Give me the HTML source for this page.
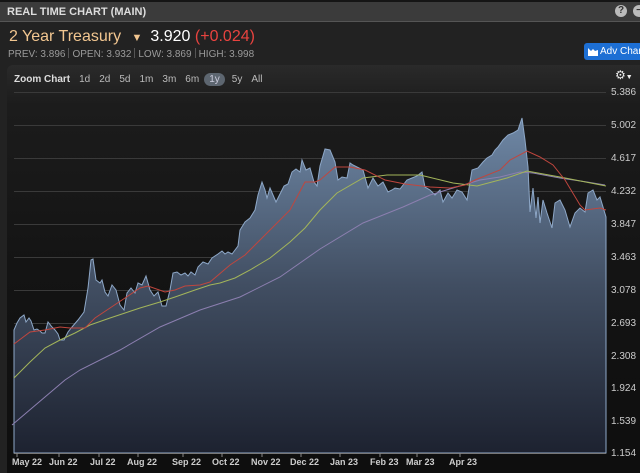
<!DOCTYPE html>
<html><head><style>
html,body{margin:0;width:640px;height:473px;overflow:hidden}
body{background:#222;font-family:"Liberation Sans",sans-serif;position:relative}
.tb{position:absolute;left:0;top:0;width:640px;height:22px;background:#3b3b3b;border-top:2px solid #151515;box-sizing:border-box;border-bottom:1px solid #555}
.tb span{position:absolute;left:7px;top:4px;font-size:11px;font-weight:bold;color:#ddd}
.ic{position:absolute;top:5px;width:12px;height:12px;border-radius:50%;background:#bbb;color:#333;font-size:10px;font-weight:bold;text-align:center;line-height:12px}
.hdr{position:absolute;left:9px;top:28px;font-size:16px;color:#f2c690;white-space:nowrap}
.hdr .p{color:#fff;margin-left:8px}.hdr .c{color:#e8433f}
.st{position:absolute;left:8px;top:48px;font-size:10px;color:#9a9a9a;white-space:nowrap}
.st i{display:inline-block;width:1px;height:10px;background:#555;margin:0 3px;vertical-align:-1px}
.btn{position:absolute;left:584px;top:43px;width:62px;height:17px;background:#1d6fd4;border-radius:3px;color:#fff;font-size:10px;line-height:17px;padding-left:16px;box-sizing:border-box;white-space:nowrap;overflow:hidden}
.panel{position:absolute;left:7px;top:65px;width:633px;height:408px;background:linear-gradient(#2a2a2a,#1c1c1c 40px,#141414 200px,#0e0e0e);border-radius:6px 0 0 0}
.zb{position:absolute;left:14px;top:74px;font-size:10px;color:#ccc;white-space:nowrap}
.zb b{color:#ddd;margin-right:9px}.zb span{margin-right:9px;color:#bbb}
.zb .a{background:#5d6670;border-radius:7px;padding:1px 5px;color:#ccd;margin-right:7px;margin-left:-4px}
.yl{position:absolute;left:611px;font-size:10px;color:#ccc}
.xl{position:absolute;top:457px;font-size:9px;color:#ccc;font-weight:bold}
</style></head><body>
<div class="tb"><span>REAL TIME CHART (MAIN)</span></div>
<div class="ic" style="left:615px">?</div><div class="ic" style="left:633px">−</div>
<div class="hdr">2 Year Treasury <span style="font-size:11px;margin-left:6px">▼</span><span class="p">3.920</span> <span class="c">(+0.024)</span></div>
<div class="st">PREV: 3.896<i></i>OPEN: 3.932<i></i>LOW: 3.869<i></i>HIGH: 3.998</div>
<div class="btn"><svg style="position:absolute;left:4px;top:4px" width="10" height="9"><path d="M0 9V1L3 4L5 2L7 4L10 3V9Z" fill="#fff"/></svg>Adv Charts</div>
<div class="panel"></div>
<div class="zb"><b>Zoom Chart</b><span>1d</span><span>2d</span><span>5d</span><span>1m</span><span>3m</span><span>6m</span><span class="a">1y</span><span>5y</span><span>All</span></div>
<div style="position:absolute;left:615px;top:68px;color:#eee;font-size:12px">⚙<span style="font-size:7px">▼</span></div>
<svg style="position:absolute;left:0;top:0" width="640" height="473">
<defs><linearGradient id="g" x1="0" y1="118" x2="0" y2="453" gradientUnits="userSpaceOnUse"><stop offset="0" stop-color="#6f88a6"/><stop offset="0.5" stop-color="#414e62"/><stop offset="1" stop-color="#1d2230"/></linearGradient></defs>
<g stroke="#3a3a3a" stroke-width="1">
<line x1="14" x2="606" y1="92.5" y2="92.5"/><line x1="14" x2="606" y1="125.5" y2="125.5"/><line x1="14" x2="606" y1="158.5" y2="158.5"/><line x1="14" x2="606" y1="191.5" y2="191.5"/><line x1="14" x2="606" y1="224.5" y2="224.5"/><line x1="14" x2="606" y1="257.5" y2="257.5"/><line x1="14" x2="606" y1="290.5" y2="290.5"/><line x1="14" x2="606" y1="323.5" y2="323.5"/><line x1="14" x2="606" y1="356.5" y2="356.5"/><line x1="14" x2="606" y1="388.5" y2="388.5"/><line x1="14" x2="606" y1="421.5" y2="421.5"/>
</g>
<path d="M14 330L17 323L20 318L24 315L26 322L29 318L31 321L34 330L37 329L40 331L42 333L45 333L48 322L52 327L55 330L58 334L60 340L64 340L68 332L72 327L78 320L84 312L88 288L91 260L93 259L96 280L100 283L102 280L105 292L108 296L112 285L116 290L120 305L124 310L127 293L131 288L135 293L138 283L142 285L146 276L150 290L154 296L158 292L162 306L166 306L170 290L173 273L177 272L181 275L185 273L188 276L191 272L195 275L198 267L203 262L208 264L212 258L218 254L222 251L225 254L228 252L232 254L235 250L238 246L240 230L245 222L250 218L255 210L258 195L262 182L265 190L267 198L270 188L273 195L276 202L280 194L284 186L288 184L292 172L296 169L300 172L302 160L306 170L310 168L314 182L317 186L320 166L325 149L330 150L335 162L338 180L342 177L347 178L350 163L353 165L363 170L368 188L373 178L378 186L383 182L388 192L392 190L395 188L400 189L407 180L412 178L417 176L422 172L425 187L430 190L435 195L440 190L443 202L448 193L452 198L457 190L462 192L467 200L472 170L478 168L483 162L487 158L492 155L495 150L498 147L503 140L508 135L513 133L518 130L522 118L525 140L528 167L530 212L533 188L536 218L538 197L540 223L543 200L547 213L552 228L555 203L560 200L565 210L570 227L575 213L580 208L585 212L588 193L593 190L597 200L600 197L606 217L606 453L14 453Z" fill="url(#g)" stroke="#8ea8c8" stroke-width="1"/>
<polyline fill="none" stroke="#8c7fb0" stroke-width="1" points="12,425 65,380 80,370 120,350 160,327 200,310 240,297 280,277 320,249 363,223 403,207 430,195 453,188 480,180 500,177 520,172 533,173 560,178 587,182 605,185"/>
<polyline fill="none" stroke="#a3b55a" stroke-width="1" points="14,378 30,362 45,348 60,340 75,333 90,325 110,318 125,313 140,308 160,302 175,297 195,290 210,285 220,283 235,278 250,270 270,258 290,242 305,228 320,210 337,193 363,178 387,175 420,175 453,183 477,186 507,178 527,171 560,177 606,186"/>
<polyline fill="none" stroke="#c0463e" stroke-width="1" points="14,344 30,332 45,330 60,327 70,328 85,328 95,318 110,308 125,298 140,288 148,286 165,292 175,290 185,286 200,285 210,282 230,265 245,255 260,240 275,225 290,210 305,182 315,182 320,180 335,167 350,167 365,170 385,180 405,184 430,187 450,188 465,185 475,180 500,170 510,160 527,151 540,157 553,165 565,180 580,205 585,210 600,208 606,210"/>
<line x1="14" x2="606" y1="453.5" y2="453.5" stroke="#777"/>
<g stroke="#888"><line x1="17" x2="17" y1="453" y2="457"/><line x1="59" x2="59" y1="453" y2="457"/><line x1="99" x2="99" y1="453" y2="457"/><line x1="138" x2="138" y1="453" y2="457"/><line x1="183" x2="183" y1="453" y2="457"/><line x1="222" x2="222" y1="453" y2="457"/><line x1="262" x2="262" y1="453" y2="457"/><line x1="301" x2="301" y1="453" y2="457"/><line x1="340" x2="340" y1="453" y2="457"/><line x1="380" x2="380" y1="453" y2="457"/><line x1="417" x2="417" y1="453" y2="457"/><line x1="460" x2="460" y1="453" y2="457"/></g>
</svg>
<div class="yl" style="top:87px">5.386</div><div class="yl" style="top:120px">5.002</div><div class="yl" style="top:153px">4.617</div><div class="yl" style="top:186px">4.232</div><div class="yl" style="top:219px">3.847</div><div class="yl" style="top:252px">3.463</div><div class="yl" style="top:285px">3.078</div><div class="yl" style="top:318px">2.693</div><div class="yl" style="top:351px">2.308</div><div class="yl" style="top:383px">1.924</div><div class="yl" style="top:416px">1.539</div><div class="yl" style="top:448px">1.154</div>
<div class="xl" style="left:12px">May 22</div><div class="xl" style="left:49px">Jun 22</div><div class="xl" style="left:90px">Jul 22</div><div class="xl" style="left:127px">Aug 22</div><div class="xl" style="left:172px">Sep 22</div><div class="xl" style="left:212px">Oct 22</div><div class="xl" style="left:251px">Nov 22</div><div class="xl" style="left:290px">Dec 22</div><div class="xl" style="left:330px">Jan 23</div><div class="xl" style="left:370px">Feb 23</div><div class="xl" style="left:406px">Mar 23</div><div class="xl" style="left:449px">Apr 23</div>
</body></html>
